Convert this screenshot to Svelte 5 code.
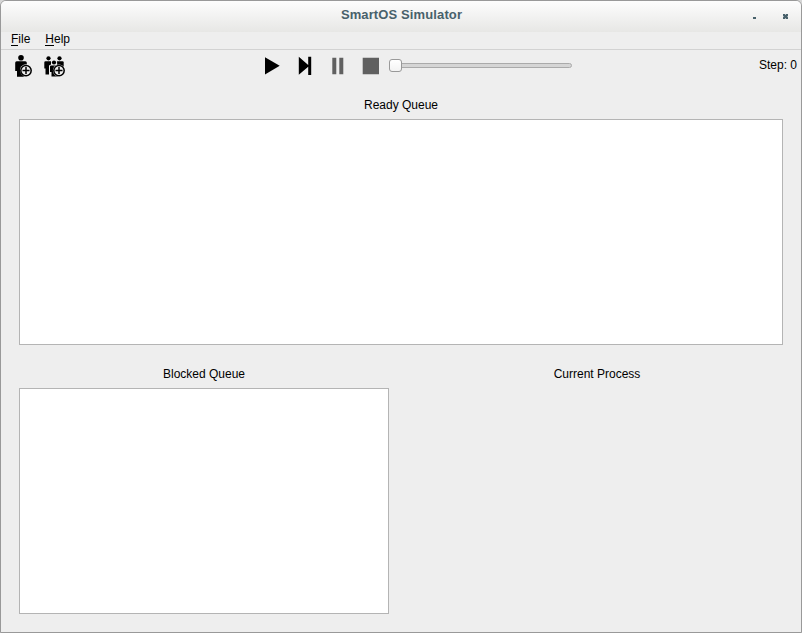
<script>
  let step = $state(0);
  const ready = [];
  const blocked = [];
</script>

<div class="window">
  <header class="titlebar">
    <h1>SmartOS Simulator</h1>
    <div class="controls">
      <svg width="4" height="12" viewBox="0 0 4 12"><path d="M0 8h3v2H0z" fill="#48616b" /></svg>
      <svg width="5" height="12" viewBox="0 0 5 12"><path d="M0 5h1.800l.7.900.7-.900H5v1.700l-.8.800.8.800V10H3.200l-.7-.900-.7.900H0V8.300l.8-.800L0 6.700z" fill="#48616b" /></svg>
    </div>
  </header>

  <nav class="menubar">
    <span class="item file"><i></i>File</span>
    <span class="item help"><i></i>Help</span>
  </nav>

  <div class="toolbar">
    <div class="left">
      <svg width="20" height="24" viewBox="0 0 20 24">
        <circle cx="7" cy="3.700" r="2.800" />
        <path d="M1.200 8.800Q1.200 7.300 2.700 7.300h8.600Q12.800 7.300 12.800 8.800V22.500H3V17H1.200z" />
        <circle cx="12" cy="16.600" r="6.300" fill="#eee" />
        <path d="M3 12h3.200Q5.200 16.500 7 20l3 2.500H3z" />
        <circle cx="12" cy="16.600" r="5.200" fill="#eee" stroke="#000" stroke-width="1.500" />
        <path d="M8.500 16.600h7M12 13.100v7" stroke="#000" stroke-width="1.500" />
      </svg>
      <svg width="24" height="24" viewBox="0 0 24 24">
        <circle cx="5.500" cy="4.300" r="2.100" />
        <circle cx="16.500" cy="4.300" r="2.100" />
        <circle cx="11" cy="8.500" r="2.100" />
        <path d="M1.300 8.500Q1.300 7.200 2.500 7.200H8V10.500L6 11.500V20.500H2.500V14.500H1.300z" />
        <path d="M14 7.200h5.500Q20.700 7.200 20.700 8.500V14H14.500z" />
        <path d="M7 12.500Q7 11.400 8 11.400h6Q15 11.400 15 12.500V22.500H8.500V18H7z" />
        <circle cx="16" cy="16.600" r="6.100" fill="#eee" />
        <circle cx="16" cy="16.600" r="5.200" fill="#eee" stroke="#000" stroke-width="1.500" />
        <path d="M12.500 16.600h7M16 13.100v7" stroke="#000" stroke-width="1.500" />
      </svg>
    </div>
    <div class="playback">
      <svg width="16" height="20" viewBox="0 0 16 20"><path d="M0 1.300L14.700 9.800 0 18.500z" /></svg>
      <svg width="15" height="20" viewBox="0 0 15 20"><path d="M.8.800L10.200 9V.800h3V19h-3v-8.200L.8 18.800z" /></svg>
      <svg width="12" height="20" viewBox="0 0 12 20"><path d="M.3 1.700h4V18.300h-4zM7.300 1.700h4V18.300h-4z" fill="#606060" /></svg>
      <svg width="18" height="20" viewBox="0 0 18 20"><path d="M.7 1.800H17V18.200H.7z" fill="#606060" /></svg>
    </div>
    <div class="slider"><div class="track"></div><div class="thumb"></div></div>
    <span class="step">Step: {step}</span>
  </div>

  <main>
    <section>
      <h2>Ready Queue</h2>
      <div class="list">{#each ready as p}<p>{p}</p>{/each}</div>
    </section>
    <div class="bottom">
      <section>
        <h2>Blocked Queue</h2>
        <div class="list">{#each blocked as p}<p>{p}</p>{/each}</div>
      </section>
      <section class="current"><h2>Current Process</h2></section>
    </div>
  </main>
</div>

<style>
  :global(body) { background: #d6d6d6; overflow: hidden; }
  .window {
    box-sizing: border-box;
    width: 802px;
    height: 633px;
    display: flex;
    flex-direction: column;
    border: 1px solid #999;
    border-radius: 6px 6px 0 0;
    background: #eee;
    overflow: hidden;
    font: 12px/14px "Liberation Sans", Arial, sans-serif;
    color: #000;
  }
  svg { display: block; flex: none; }
  .titlebar {
    display: grid;
    grid-template-columns: 1fr auto 1fr;
    height: 31px;
    flex: none;
    background: linear-gradient(#fdfdfd, #e7e7e5);
  }
  h1 {
    grid-column: 2;
    margin: 6px 0 0 1px;
    font-size: 13px;
    line-height: 16px;
    font-weight: bold;
    letter-spacing: 0.12px;
    color: #48616b;
  }
  .controls {
    display: flex;
    justify-content: flex-end;
    gap: 26px;
    padding: 8px 13px 0 0;
  }
  .menubar {
    box-sizing: border-box;
    display: flex;
    gap: 15px;
    height: 18px;
    flex: none;
    padding-left: 10px;
    border-bottom: 1px solid #d2d2d2;
  }
  .item { position: relative; }
  .item i {
    position: absolute;
    left: 0;
    top: 13px;
    width: 7px;
    height: 1px;
    background: #000;
  }
  .help i { width: 9px; }
  .toolbar {
    display: flex;
    height: 32px;
    flex: none;
    padding-right: 4px;
  }
  .left { display: flex; gap: 9px; width: 264px; box-sizing: border-box; padding: 4px 0 0 13px; }
  .playback { display: flex; width: 124px; padding-top: 6px; }
  .playback svg:nth-child(1) { margin-right: 17px; }
  .playback svg:nth-child(2) { margin-right: 19px; }
  .playback svg:nth-child(3) { margin-right: 18px; }
  .slider { display: grid; width: 183px; height: 32px; align-items: start; }
  .slider > div { grid-area: 1 / 1; box-sizing: border-box; }
  .track {
    height: 5px;
    margin-top: 13px;
    border: 1px solid #aaa;
    border-radius: 2.500px;
    background: #d5d5d5;
  }
  .thumb {
    width: 13px;
    height: 13px;
    margin-top: 9px;
    border: 1px solid #999;
    border-radius: 3px;
    background: linear-gradient(#fff, #f3f3f3);
  }
  .step { margin: 8px 0 0 auto; }
  main { padding: 16px 18px 0; }
  h2 { margin: 0; height: 21px; font-size: 12px; line-height: 14px; font-weight: normal; text-align: center; }
  .list { box-sizing: border-box; height: 226px; border: 1px solid #b4b4b4; background: #fff; }
  .bottom { display: grid; grid-template-columns: 370px 1fr; gap: 22px; margin-top: 22px; }
</style>
